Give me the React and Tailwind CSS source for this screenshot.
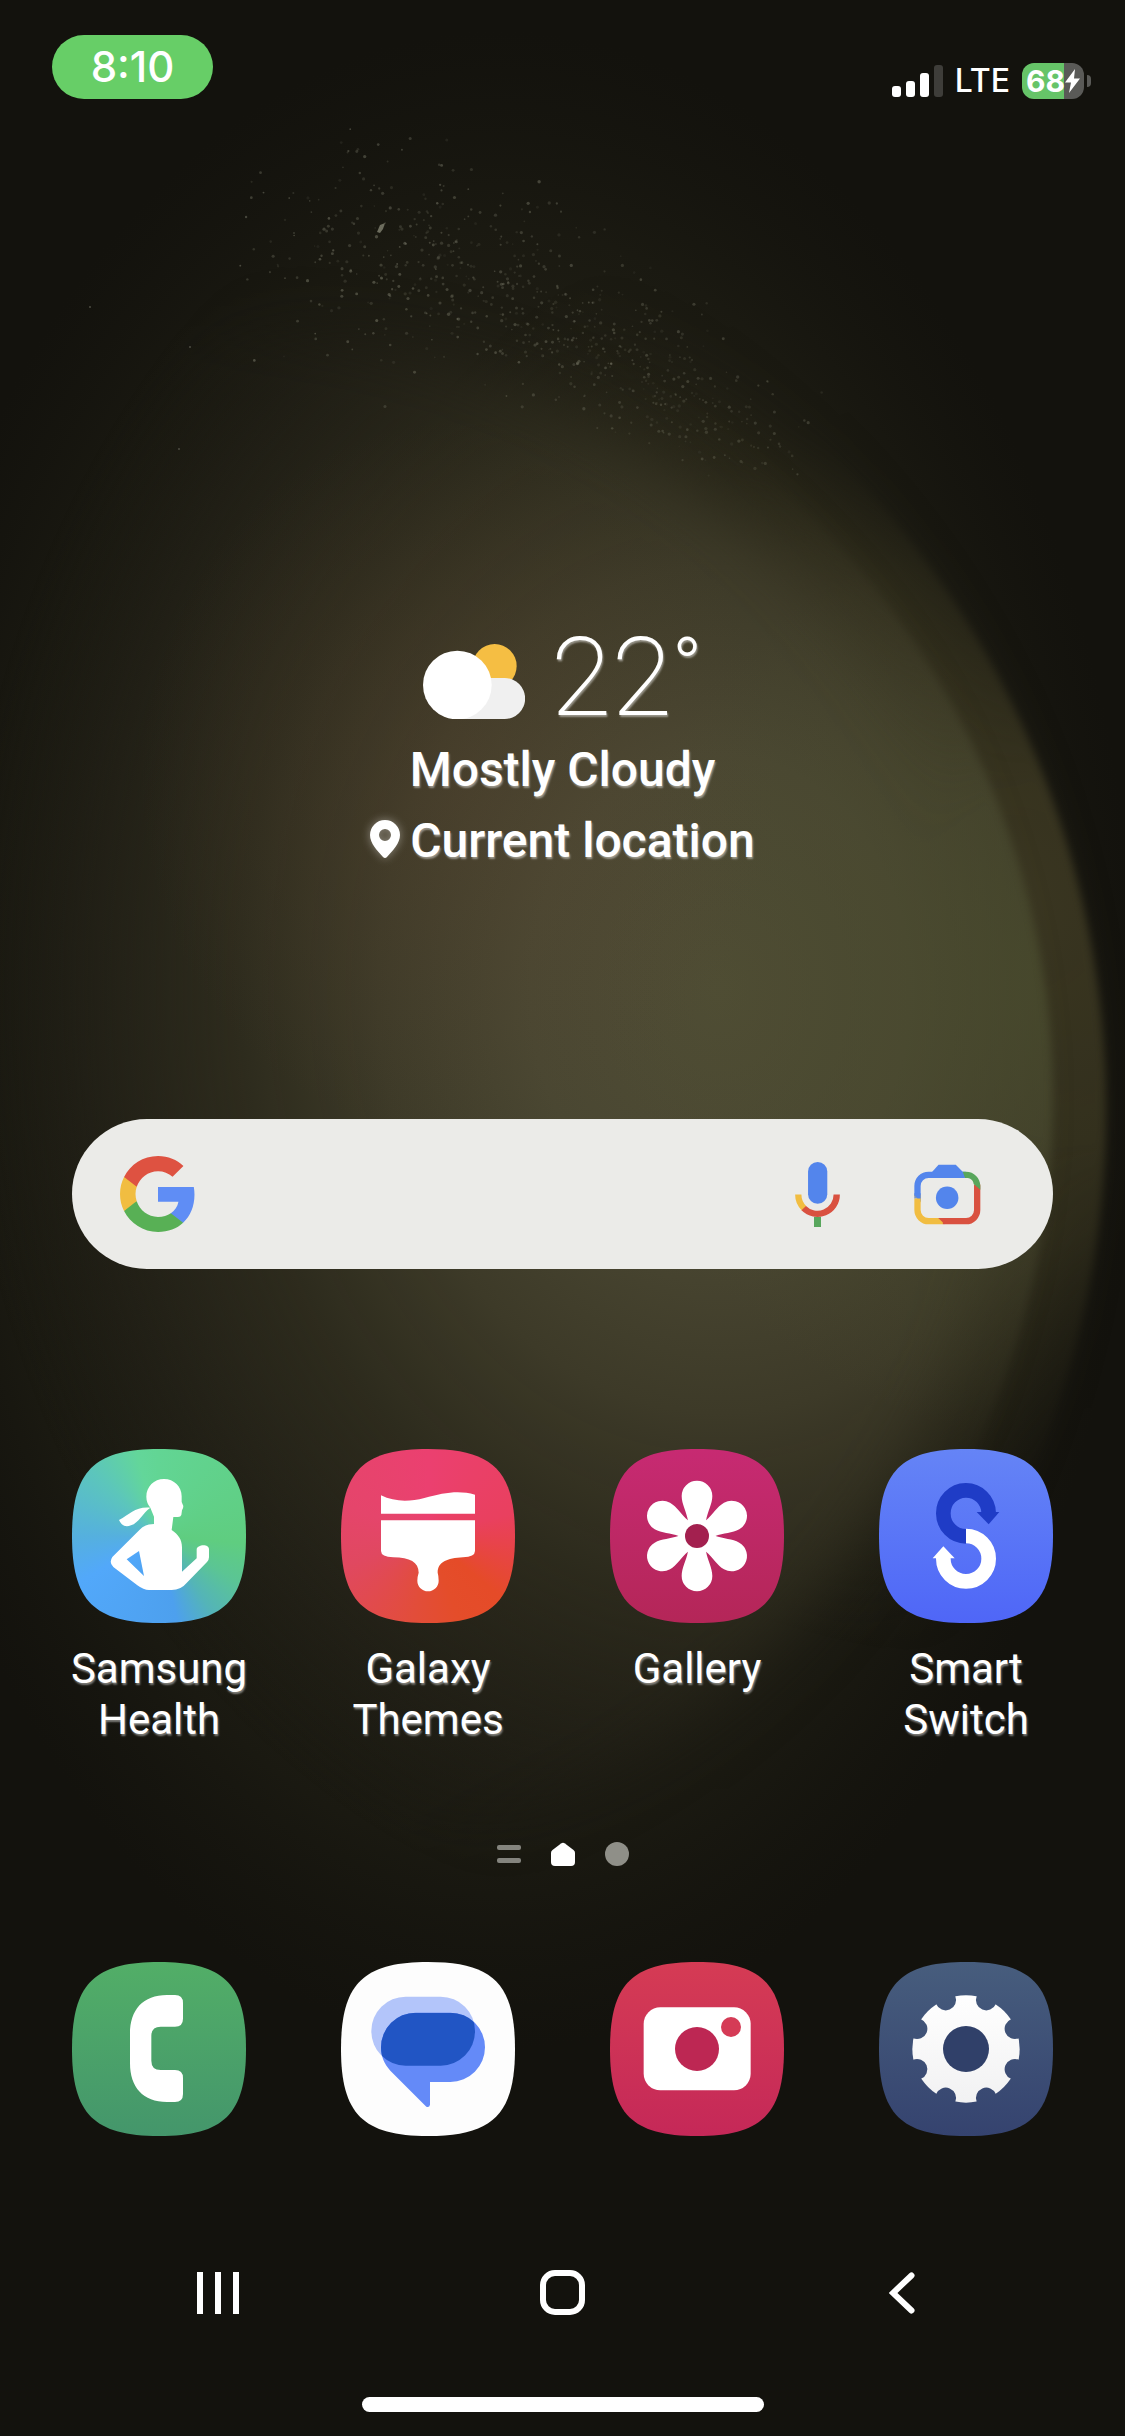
const SQUIRCLE =
  "[clip-path:path('M0_87C0_22_22_0_87_0S174_22_174_87_152_174_87_174_0_152_0_87Z')]";

const FONT = "font-[Roboto,'Noto_Sans',sans-serif]";

// small seeded generator so the dust looks the same on every render
function makeDust(count) {
  let seed = 11;
  const rand = () => {
    seed = (seed * 16807) % 2147483647;
    return seed / 2147483647;
  };
  const bell = () => rand() + rand() + rand() - 1.5;
  return Array.from({ length: count }, () => {
    const t = rand();
    const spread = 120 - t * 90;
    return {
      x: 310 + t * 440 + bell() * 90,
      y: 245 + t * t * 215 + bell() * spread,
      r: 0.8 + rand() * 0.9,
      o: (0.1 + rand() * 0.36) * (1 - t * 0.4),
    };
  });
}

const dust = makeDust(760);
const teeth = [0, 1, 2, 3, 4, 5, 6, 7];

function Wallpaper() {
  return (
    <svg
      className="absolute inset-0 w-full h-full pointer-events-none"
      viewBox="0 0 1125 2436"
      preserveAspectRatio="xMidYMid slice"
      aria-hidden="true"
    >
      <defs>
        <radialGradient id="haze">
          <stop offset="0" stopColor="#323021" />
          <stop offset="0.5" stopColor="#29271b" stopOpacity="0.9" />
          <stop offset="0.8" stopColor="#1f1e14" stopOpacity="0.6" />
          <stop offset="1" stopColor="#1a1911" stopOpacity="0" />
        </radialGradient>
        <radialGradient id="ring" gradientUnits="userSpaceOnUse" cx="1010" cy="900" r="760">
          <stop offset="0" stopColor="#3a3621" />
          <stop offset="0.45" stopColor="#36331f" stopOpacity="0.85" />
          <stop offset="1" stopColor="#2a2818" stopOpacity="0" />
        </radialGradient>
        <radialGradient
          id="core"
          gradientUnits="userSpaceOnUse"
          cx="0"
          cy="0"
          r="1"
          gradientTransform="translate(720 990) scale(760 940)"
        >
          <stop offset="0" stopColor="#504d35" />
          <stop offset="0.25" stopColor="#4a4732" />
          <stop offset="0.45" stopColor="#3d3a28" />
          <stop offset="0.65" stopColor="#2d2b1d" stopOpacity="0.9" />
          <stop offset="0.85" stopColor="#222017" stopOpacity="0.5" />
          <stop offset="1" stopColor="#1a1911" stopOpacity="0" />
        </radialGradient>
        <radialGradient id="warm">
          <stop offset="0" stopColor="#5c4530" stopOpacity="0.3" />
          <stop offset="1" stopColor="#5c4530" stopOpacity="0" />
        </radialGradient>
        <radialGradient id="rim" gradientUnits="userSpaceOnUse" cx="1060" cy="980" r="460">
          <stop offset="0" stopColor="#4a4d2d" stopOpacity="0.7" />
          <stop offset="0.5" stopColor="#4a4c2e" stopOpacity="0.4" />
          <stop offset="1" stopColor="#4a4c2e" stopOpacity="0" />
        </radialGradient>
        <radialGradient id="crisp" gradientUnits="userSpaceOnUse" cx="1080" cy="960" r="600">
          <stop offset="0.3" stopColor="#fff" />
          <stop offset="1" stopColor="#fff" stopOpacity="0" />
        </radialGradient>
        <filter id="blur-lg" x="-20%" y="-20%" width="140%" height="140%">
          <feGaussianBlur stdDeviation="30" />
        </filter>
        <filter id="blur-sm" x="-20%" y="-20%" width="140%" height="140%">
          <feGaussianBlur stdDeviation="4" />
        </filter>
        <clipPath id="inner-edge">
          <circle cx="228" cy="1100" r="825" />
        </clipPath>
        <clipPath id="outer-edge">
          <circle cx="181" cy="1110" r="925" />
        </clipPath>
        <mask id="outer" maskUnits="userSpaceOnUse" x="0" y="0" width="1125" height="2436">
          <circle cx="165" cy="1110" r="900" fill="#fff" filter="url(#blur-lg)" />
          <g filter="url(#blur-sm)">
            <rect width="1200" height="2436" fill="url(#crisp)" clipPath="url(#outer-edge)" />
          </g>
        </mask>
        <mask id="inner" maskUnits="userSpaceOnUse" x="0" y="0" width="1125" height="2436">
          <circle cx="228" cy="1100" r="775" fill="#fff" filter="url(#blur-lg)" />
          <g filter="url(#blur-sm)">
            <rect width="1200" height="2436" fill="url(#crisp)" clipPath="url(#inner-edge)" />
          </g>
        </mask>
      </defs>
      <rect width="1125" height="2436" fill="#13120d" />
      <ellipse cx="500" cy="1040" rx="640" ry="1010" fill="url(#haze)" />
      <rect width="1125" height="2436" fill="url(#ring)" mask="url(#outer)" />
      <g mask="url(#inner)">
        <rect width="1125" height="2436" fill="url(#core)" />
        <rect width="1125" height="2436" fill="url(#rim)" />
      </g>
      <ellipse cx="460" cy="780" rx="320" ry="360" fill="url(#warm)" />
      {dust.map((d, i) => (
        <circle key={i} cx={d.x} cy={d.y} r={d.r} fill="#8f8f7c" opacity={d.o} />
      ))}
      <path d="m377 232 3-7 5-2-2 6-3 4z" fill="#6d6d5e" />
      <circle cx="90" cy="307" r="1" fill="#4d4d42" />
      <circle cx="190" cy="347" r="1" fill="#4d4d42" />
      <circle cx="179" cy="449" r="1" fill="#4d4d42" />
    </svg>
  );
}

function StatusBar() {
  return (
    <header className="flex items-end justify-between pt-[35px] pl-[52px] pr-[34px] font-[Inter,sans-serif]">
      <time className="flex items-center justify-center h-16 w-[161px] rounded-full bg-[#67ce67] text-[42px] leading-none font-medium">
        8:10
      </time>
      <div className="flex items-center gap-3">
        <svg className="w-[51px] h-8" viewBox="0 0 51 32" fill="#fff" aria-label="Signal">
          <rect x="0" y="21" width="9" height="11" rx="3" />
          <rect x="14" y="16" width="9" height="16" rx="3" />
          <rect x="28" y="8" width="9" height="24" rx="3" />
          <rect x="42" y="0" width="9" height="32" rx="3" fill="#3e3d39" />
        </svg>
        <span className="text-[32px] leading-[34px] font-medium">LTE</span>
        <div className="flex items-center gap-[3px]">
          <div className="flex items-center h-9 w-[62px] rounded-xl bg-[linear-gradient(90deg,#66c468_68%,#5a5a57_68%)] pl-1">
            <span className="text-[30px] leading-none font-bold">68</span>
            <svg className="w-[15px] h-6 shrink-0" viewBox="0 0 15 24" fill="#fff" aria-hidden="true">
              <path d="M10 0 0 13.500h6L4 24 15 9.500H9z" />
            </svg>
          </div>
          <span className="w-1 h-3 rounded-r-full bg-[#5a5a57]" />
        </div>
      </div>
    </header>
  );
}

function Weather() {
  return (
    <section
      className={`mt-[522px] flex flex-col items-center text-5xl leading-[71px] font-medium [text-shadow:1px_2px_2px_rgb(255_255_255/0.45)] ${FONT}`}
    >
      <div className="flex items-center gap-[26px]">
        <svg className="w-[102px] h-[75px] mt-2" viewBox="0 0 306 225" aria-label="Partly cloudy">
          <circle cx="215" cy="66" r="66" fill="#f5be43" />
          <path d="M100 102h145a61 61 0 0 1 0 123H100z" fill="#f0f0f0" />
          <circle cx="103" cy="123" r="103" fill="#fff" />
        </svg>
        <p className="flex items-start font-extralight">
          <span className="text-[110px] leading-[113px]">22</span>
          <span className="text-[80px] leading-[93px] font-light">°</span>
        </p>
      </div>
      <p>Mostly Cloudy</p>
      <p className="flex items-center gap-[10px]">
        <svg
          className="w-[30px] h-[38px] -mt-1 drop-shadow-[0_0_5px_rgb(255_255_255/0.4)]"
          viewBox="0 0 90 114"
          aria-hidden="true"
        >
          <path
            fill="#fff"
            fillRule="evenodd"
            d="M45 0a45 45 0 0 1 45 45c0 25-22 47-39 66q-6 6-12 0C22 92 0 70 0 45A45 45 0 0 1 45 0Zm0 27a18 18 0 1 0 0 36 18 18 0 0 0 0-36Z"
          />
        </svg>
        Current location
      </p>
    </section>
  );
}

function SearchBar() {
  return (
    <form
      role="search"
      className="mt-[243px] mx-[72px] h-[150px] rounded-full bg-[#ebebe8] pl-12 pr-[72px] flex items-center"
    >
      <button type="button" aria-label="Google">
        <svg className="w-[76px] h-[76px]" viewBox="1 1 22 22">
          <path
            fill="#5f8df5"
            d="M22.56 12.25c0-.78-.07-1.53-.2-2.25H12v4.26h5.92c-.26 1.37-1.04 2.53-2.21 3.31v2.77h3.57c2.08-1.92 3.28-4.74 3.28-8.09z"
          />
          <path
            fill="#58b055"
            d="M12 23c2.97 0 5.46-.98 7.28-2.66l-3.57-2.77c-.98.66-2.23 1.06-3.71 1.06-2.86 0-5.29-1.93-6.16-4.53H2.18v2.84C3.99 20.53 7.7 23 12 23z"
          />
          <path
            fill="#f1bd41"
            d="M5.84 14.09c-.22-.66-.35-1.36-.35-2.09s.13-1.43.35-2.09V7.07H2.18C1.43 8.55 1 10.22 1 12s.43 3.45 1.18 4.93l2.85-2.22.81-.62z"
          />
          <path
            fill="#de5241"
            d="M12 5.38c1.62 0 3.06.56 4.21 1.64l3.15-3.15C17.45 2.09 14.97 1 12 1 7.7 1 3.99 3.47 2.18 7.07l3.66 2.84c.87-2.6 3.3-4.53 6.16-4.53z"
          />
        </svg>
      </button>
      <input
        type="text"
        aria-label="Search"
        className="flex-1 min-w-0 h-full px-6 text-4xl text-neutral-800 bg-transparent outline-none"
      />
      <button type="button" aria-label="Voice search" className="mr-[74px]">
        <svg className="w-[45px] h-[65px]" viewBox="0 0 135 196" fill="none" strokeWidth="19">
          <rect x="39" y="0" width="58" height="126" rx="29" fill="#5385ec" />
          <path d="M67.500 165v31" stroke="#58a65c" strokeWidth="21" />
          <path d="M9.500 98a58 58 0 0 0 18 42" stroke="#f1bd41" />
          <path d="M26 139a58 58 0 0 0 99.500-41" stroke="#d95140" />
        </svg>
      </button>
      <button type="button" aria-label="Google Lens">
        <svg className="w-[67px] h-[61px]" viewBox="0 0 200 184" fill="none" strokeWidth="19">
          <path d="M9.500 104V66a33.500 33.500 0 0 1 33.500-33.500h112" stroke="#5385ec" />
          <path d="M52 26 73 2h52l23 24v10H52z" fill="#5385ec" />
          <path d="M0 93v4l19 19V93z" fill="#f1bd41" />
          <path d="M0 88h19v26L0 96z" fill="#5385ec" />
          <path d="M9.500 104v35a33.500 33.500 0 0 0 33.500 33.500h44" stroke="#f1bd41" />
          <path d="M189.500 62v77a33.500 33.500 0 0 1-33.500 33.500H86" stroke="#d95140" />
          <path d="M72 163h20v19z" fill="#d95140" />
          <path d="M146 23h10c24 0 43 19 43 43v12l-20-18c-2-12-10-18-23-18h-3z" fill="#58a65c" />
          <circle cx="99" cy="102" r="34" fill="#5385ec" />
        </svg>
      </button>
    </form>
  );
}

function HealthGlyph() {
  return (
    <>
      <path d="M235 176C190 172 174 196 141 213q12 26 36 16c24-8 34-36 58-53Z" />
      <path
        fillRule="evenodd"
        d="M276 90c30 0 53 23 53 52v17l5 12q0 8-4 13l-2 14q-2 6-10 6h-14l-5 39c20 14 31 28 31 52v73l44-40v-26c0-15 37-19 37-1v24q0 8-6 14l-62 64q-16 20-44 20h-68q-16 0-35-14l-72-55q-14-13-3-30l82-82q15-17 43-17v-22l-11-27q-12-15-12-33c0-30 23-53 53-53Zm-75 216-37 25 52 50Z"
      />
    </>
  );
}

function ThemesGlyph() {
  return (
    <>
      <path d="M120 139c40 20 85 20 130 8 60-17 105-24 152-10v57H120Z" />
      <path d="M120 214h282v92q0 17-36 19c-48 3-76 14-76 46q3 10 3 24a32 32 0 0 1-64 0q0-12 4-24c0-32-26-45-76-46q-37-2-37-19Z" />
    </>
  );
}

function GalleryGlyph() {
  return (
    <g transform="translate(261 261)">
      {[0, 60, 120, 180, 240, 300].map((angle) => (
        <path
          key={angle}
          transform={`rotate(${angle})`}
          d="M-27-46C-32-74-46-96-46-120a46 46 0 0 1 92 0C46-96 32-74 27-46L0 0Z"
        />
      ))}
      <circle r="52" />
      <circle r="36" fill="#a3204f" />
    </g>
  );
}

function SwitchGlyph() {
  return (
    <>
      <path d="M261 262a68 69 0 1 1 68-70" fill="none" stroke="#1f3cc6" strokeWidth="44" />
      <path d="M293 189h68l-32 37Z" fill="#1f3cc6" />
      <path d="M261 261a68 68 0 1 1-68 68v-6" fill="none" stroke="#fff" strokeWidth="44" />
      <path d="M161 328l32-36 34 36Z" />
    </>
  );
}

function PhoneGlyph() {
  return (
    <path d="M285 99h24q24 0 24 24v47q0 24-24 24h-43q-28 0-28 28v74q0 28 28 28h43q24 0 24 24v48q0 24-24 24h-24c-72 0-111-44-111-116v-89c0-72 39-116 111-116Z" />
  );
}

function MessagesGlyph() {
  const bubble =
    "M224 152h104a104 104 0 0 1 0 208h-61v68q-2 10-11 6L148 326c-18-20-28-42-28-70a104 104 0 0 1 104-104Z";
  return (
    <>
      <defs>
        <clipPath id="bubble">
          <path d={bubble} />
        </clipPath>
      </defs>
      <rect x="91" y="104" width="311" height="207" rx="103" fill="#b3c5fa" />
      <path d={bubble} fill="#648af8" />
      <rect x="91" y="104" width="311" height="207" rx="103" fill="#2155c4" clipPath="url(#bubble)" />
    </>
  );
}

function CameraGlyph() {
  return (
    <>
      <rect x="101" y="136" width="321" height="249" rx="50" />
      <circle cx="261" cy="261" r="66" fill="#bd2753" />
      <circle cx="363" cy="195" r="30" fill="#d53b56" />
    </>
  );
}

function SettingsGlyph() {
  return (
    <>
      <defs>
        <linearGradient id="gear-fill" x1="0" y1="0" x2="0" y2="1">
          <stop offset="0" stopColor="#fff" />
          <stop offset="1" stopColor="#f1f1f2" />
        </linearGradient>
        <mask id="gear">
          <circle cx="261" cy="261" r="161" fill="#fff" />
          {teeth.map((n) => (
            <circle
              key={n}
              cx="261"
              cy="102"
              r="31"
              fill="#000"
              transform={`rotate(${22.5 + n * 45} 261 261)`}
            />
          ))}
          <circle cx="261" cy="261" r="69" fill="#000" />
        </mask>
      </defs>
      <circle cx="261" cy="261" r="80" fill="#304069" />
      <rect x="90" y="90" width="342" height="342" fill="url(#gear-fill)" mask="url(#gear)" />
    </>
  );
}

const apps = [
  {
    name: 'Samsung Health',
    bg: 'bg-[conic-gradient(#62d594_0deg,#5fcd80_95deg,#5bc594_120deg,#54b4b8_145deg,#4da0ee_168deg,#52a8fa_240deg,#55b0de_270deg,#5cc6bb_315deg,#63d69a_345deg,#62d594_360deg)]',
    Glyph: HealthGlyph,
  },
  {
    name: 'Galaxy Themes',
    bg: 'bg-[conic-gradient(#eb4070_0deg,#e9405f_75deg,#e8434c_95deg,#e54b28_130deg,#e44d2a_160deg,#e24d3a_190deg,#e04860_250deg,#e5456b_290deg,#eb4070_360deg)]',
    Glyph: ThemesGlyph,
  },
  { name: 'Gallery', bg: 'bg-linear-to-b from-[#c72a72] to-[#b42658]', Glyph: GalleryGlyph },
  { name: 'Smart Switch', bg: 'bg-linear-to-b from-[#6584f6] to-[#4f66f7]', Glyph: SwitchGlyph },
];

const dock = [
  { name: 'Phone', bg: 'bg-linear-to-b from-[#52ae67] to-[#44966b]', Glyph: PhoneGlyph },
  { name: 'Messages', bg: 'bg-[#fdfdfd]', Glyph: MessagesGlyph },
  { name: 'Camera', bg: 'bg-linear-to-b from-[#d53b54] to-[#c52858]', Glyph: CameraGlyph },
  { name: 'Settings', bg: 'bg-linear-to-b from-[#475d7d] to-[#35436f]', Glyph: SettingsGlyph },
];

function AppIcon({ app, showLabel }) {
  const { name, bg, Glyph } = app;
  return (
    <button
      type="button"
      aria-label={name}
      className={`flex flex-col items-center gap-5 w-[174px] text-[42px] leading-[51px] ${FONT}`}
    >
      <span className={`block w-[174px] h-[174px] ${SQUIRCLE} ${bg}`}>
        <svg className="w-full h-full" viewBox="0 0 522 522" fill="#fff" aria-hidden="true">
          <Glyph />
        </svg>
      </span>
      {showLabel && (
        <span className="[text-shadow:1px_2px_2px_rgb(255_255_255/0.45)]">{name}</span>
      )}
    </button>
  );
}

function PageDots() {
  return (
    <div className="mt-[97px] flex items-center justify-center gap-[30px]">
      <span className="flex flex-col gap-2 w-6">
        <span className="h-[5px] rounded-xs bg-[#84847e]" />
        <span className="h-[5px] rounded-xs bg-[#84847e]" />
      </span>
      <svg className="w-6 h-6" viewBox="0 0 24 24" fill="#fff" aria-hidden="true">
        <path d="M10 1.500q2-1.500 4 0l8.500 6.500q1.500 1.200 1.500 3V20q0 4-4 4H4q-4 0-4-4v-9q0-1.800 1.500-3z" />
      </svg>
      <span className="w-6 h-6 rounded-full bg-[#8f8f88]" />
    </div>
  );
}

function NavBar() {
  return (
    <nav className="mt-[134px] px-[196px] flex items-center justify-between">
      <button type="button" aria-label="Recent apps" className="flex justify-center gap-3 w-11">
        <span className="w-[6px] h-[42px] bg-white" />
        <span className="w-[6px] h-[42px] bg-white" />
        <span className="w-[6px] h-[42px] bg-white" />
      </button>
      <button
        type="button"
        aria-label="Home"
        className="w-[45px] h-[45px] rounded-[15px] border-[6px] border-white"
      />
      <button type="button" aria-label="Back" className="w-11 flex justify-start pl-1">
        <svg className="w-[26px] h-[42px]" viewBox="0 0 26 42" fill="none" aria-hidden="true">
          <path d="M22.500 3.500 4 21l18.500 17.500" stroke="#fff" strokeWidth="6" strokeLinecap="round" />
        </svg>
      </button>
    </nav>
  );
}

export default function App() {
  return (
    <main className="relative min-h-screen overflow-hidden bg-[#13120d] text-white">
      <Wallpaper />
      <div className="relative flex flex-col">
        <StatusBar />
        <Weather />
        <SearchBar />

        {/* Home screen apps */}
        <div className="mt-[180px] px-[72px] flex items-start justify-between">
          {apps.map((app) => (
            <AppIcon key={app.name} app={app} showLabel />
          ))}
        </div>

        <PageDots />

        {/* Dock */}
        <div className="mt-24 px-[72px] flex justify-between">
          {dock.map((app) => (
            <AppIcon key={app.name} app={app} />
          ))}
        </div>

        <NavBar />
        <div className="mt-[82px] mb-6 mx-auto w-[402px] h-[15px] rounded-full bg-white" />
      </div>
    </main>
  );
}
